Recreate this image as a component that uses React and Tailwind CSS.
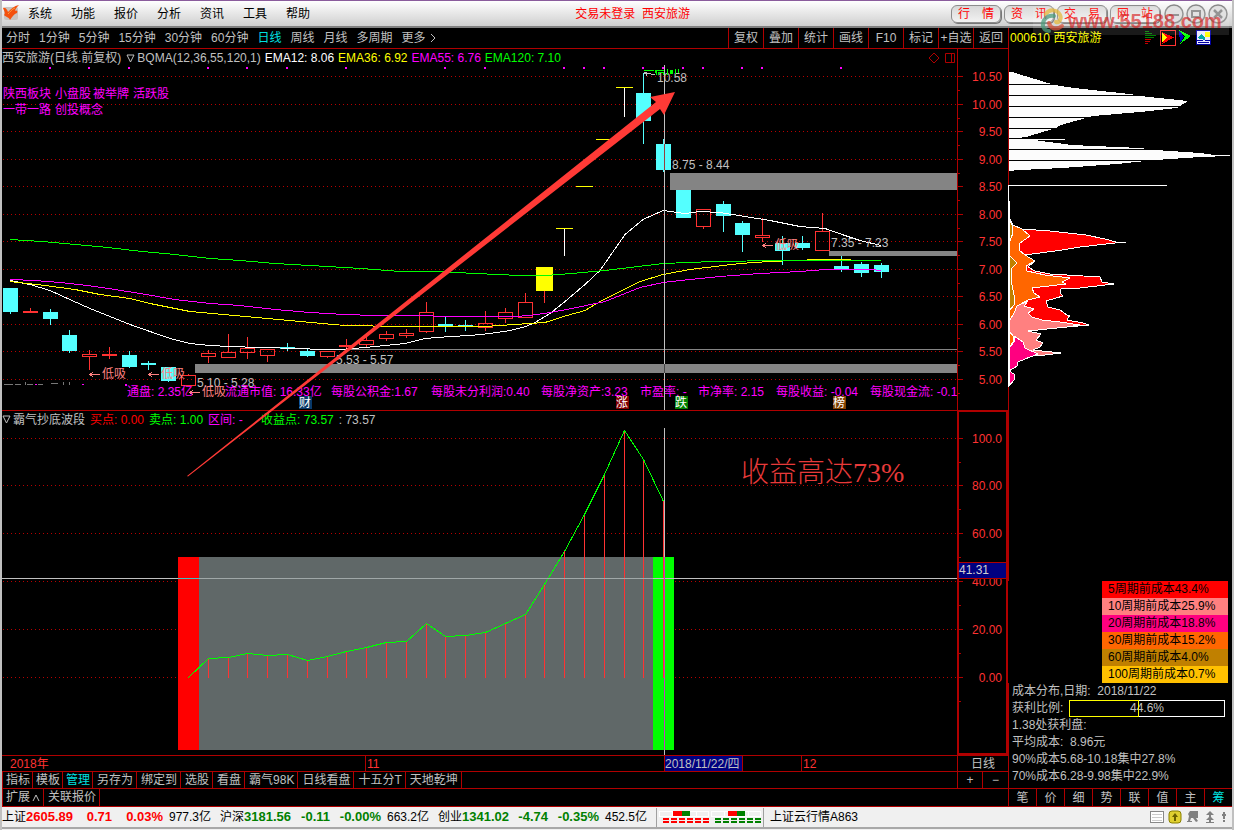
/**
 * App.jsx
 * Stock terminal: menu, K-line chart, indicator pane, cost distribution, ticker bar.
 */
import { clsx } from "clsx";

const MENUS = ["系统", "功能", "报价", "分析", "资讯", "工具", "帮助"];
const PERIODS = ["分时", "1分钟", "5分钟", "15分钟", "30分钟", "60分钟", "日线", "周线", "月线", "多周期"];
const TOOLS = ["复权", "叠加", "统计", "画线", "F10", "标记", "+自选", "返回"];
const LINKS = [["行", "情"], ["资", "讯"], ["交", "易"], ["网", "站"]];
const SIDE_TABS = ["笔", "价", "细", "势", "联", "值", "主", "筹"];
const TABS = ["另存为", "绑定到", "选股", "看盘", "霸气98K", "日线看盘", "十五分T", "天地乾坤"];

const COSTS = [
  ["5周期前成本43.4%", "bg-[#ff0000]"],
  ["10周期前成本25.9%", "bg-[#ff8080]"],
  ["20周期前成本18.8%", "bg-[#ff0080]"],
  ["30周期前成本15.2%", "bg-[#ff6600]"],
  ["60周期前成本4.0%", "bg-[#c08000]"],
  ["100周期前成本0.7%", "bg-[#ffc000]"],
];

const INDICES = [
  { name: "上证", price: "2605.89", diff: "0.71", pct: "0.03%", amount: "977.3亿", up: true },
  { name: "沪深", price: "3181.56", diff: "-0.11", pct: "-0.00%", amount: "663.2亿", up: false },
  { name: "创业", price: "1341.02", diff: "-4.74", pct: "-0.35%", amount: "452.5亿", up: false },
];

// [x, high, top, bottom, low, kind]  d = down (filled), u = up (hollow)
const CANDLES = [
  [10, 288, 288, 312, 314, "d"], [30, 308, 311, 313, 313, "u"], [50, 309, 312, 319, 325, "d"],
  [69, 330, 335, 351, 353, "d"], [89, 350, 354, 357, 370, "u"], [109, 347, 354, 356, 359, "u"],
  [129, 351, 355, 367, 368, "d"], [148, 361, 363, 365, 370, "d"], [168, 367, 367, 381, 382, "d"],
  [188, 374, 375, 386, 386, "u"], [208, 350, 353, 357, 363, "u"], [228, 334, 352, 358, 358, "u"],
  [247, 337, 348, 353, 359, "u"], [267, 349, 349, 356, 362, "u"], [287, 343, 347, 349, 351, "d"],
  [307, 349, 351, 356, 357, "d"], [327, 351, 351, 357, 358, "u"], [346, 339, 345, 347, 350, "u"],
  [366, 337, 340, 345, 347, "u"], [386, 331, 334, 339, 341, "u"], [406, 329, 333, 336, 338, "u"],
  [426, 302, 312, 332, 333, "u"], [445, 316, 324, 326, 332, "d"], [465, 320, 325, 326, 331, "d"],
  [485, 311, 323, 328, 331, "u"], [505, 308, 312, 319, 323, "u"], [525, 293, 302, 318, 318, "u"],
  [643, 73, 93, 121, 144, "d"], [663, 139, 144, 170, 172, "d"], [683, 190, 190, 218, 218, "d"],
  [703, 209, 209, 227, 229, "u"], [723, 201, 204, 216, 232, "d"], [742, 221, 223, 235, 252, "d"],
  [762, 218, 235, 238, 242, "u"], [782, 236, 243, 251, 265, "d"], [802, 236, 243, 248, 250, "d"],
  [822, 213, 231, 251, 251, "u"], [841, 256, 266, 269, 272, "d"], [861, 262, 264, 273, 277, "d"],
  [881, 263, 265, 272, 278, "d"],
];

const EMA120 =
  "10,239 42,241 75,244 108,247 142,251 175,254 210,258 240,260 275,263 310,265 345,267 375,269 400,271 436,271 476,273 520,275 545,275 572,273 605,270 630,267 663,263 714,261 780,260 825,260 881,260";
const EMA55 =
  "10,279 35,280 60,282 88,285 115,289 140,293 175,299 210,303 240,305 275,309 310,312 345,314 375,315 410,315 456,316 515,316 530,315 550,312 567,309 605,301 640,287 663,282 690,279 720,276 760,273 800,271 825,269 870,269 881,270";
const EMA36 =
  "10,281 45,285 75,289 100,294 130,298 150,303 190,311 245,316 300,321 345,325 400,326 485,326 530,323 545,322 567,315 585,310 602,300 640,281 663,274 690,269 740,263 770,261 820,259 851,259";
const EMA12 =
  "10,280 30,284 50,290 72,300 90,308 110,316 130,324 150,331 170,338 190,343 210,345 230,346 260,347 300,348 320,349 340,349 365,347 385,345 405,343 425,338 450,336 470,335 490,333 510,330 526,326 535,322 550,313 565,301 585,284 600,270 625,234 643,219 663,210 685,213 700,211 720,212 745,216 770,220 800,226 825,228 845,235 860,240 881,245";

const SIGNAL_DOTS = [49, 88, 128, 207, 246, 286, 345, 444, 484, 563, 583, 603, 642, 662, 682, 702, 741, 761, 840];

const PRICE_GRID = [
  [76, "10.50"], [104, "10.00"], [131, "9.50"], [159, "9.00"], [186, "8.50"], [214, "8.00"],
  [241, "7.50"], [269, "7.00"], [296, "6.50"], [324, "6.00"], [351, "5.50"], [379, "5.00"],
];
const PROFIT_GRID = [
  [438, "100.0"], [485, "80.00"], [533, "60.00"], [581, "40.00"], [629, "20.00"], [677, "0.00"],
];

const PROFIT = [
  [188, 677], [208, 658], [228, 657], [247, 653], [267, 655], [287, 654], [307, 660], [327, 656],
  [346, 651], [366, 647], [386, 642], [406, 641], [426, 623], [445, 636], [465, 635], [485, 632],
  [505, 623], [525, 614], [544, 584], [564, 551], [584, 514], [604, 474], [624, 430], [643, 459], [663, 501],
];

const FUNDAMENTALS = [
  [127, "通盘: 2.35亿"], [225, "流通市值: 16.33亿"], [331, "每股公积金:1.67"], [431, "每股未分利润:0.40"],
  [541, "每股净资产:3.23"], [640, "市盈率: -"], [698, "市净率: 2.15"], [776, "每股收益: -0.04"], [870, "每股现金流: -0.1"],
];

const BADGES = [
  [299, "财", "#083868"], [616, "涨", "#800000"], [675, "跌", "#008000"], [833, "榜", "#804000"],
];

// ── Top bars ──────────────────────────────────────────────────────────────────
function MenuBar() {
  return (
    <header className="relative flex h-7 items-center border-t border-b-2 border-t-[#8a5c9c] border-b-[#808080] bg-gradient-to-b from-white to-[#cfcfcf] pl-px pr-1">
      <svg width="17" height="17" viewBox="0 0 17 17" aria-hidden="true">
        <rect x="1" y="2" width="14" height="13" rx="2" fill="#c9c4c0" />
        <path d="M0 3 C2 2 4 4 5 7 C8 4 11 1 16 0 C14 2 12 4 12 6 C14 5 15 6 14 8 C11 9 9 12 7 15 C6 12 3 12 1 10 C3 8 1 6 0 3Z" fill="#f4500c" />
        <path d="M5 9 C7 7 9 4 12 3" stroke="#ff9a3c" strokeWidth="1" fill="none" />
      </svg>
      <nav className="ml-2 flex gap-[19px]">
        {MENUS.map((m) => (
          <button key={m} className="text-xs text-black">{m}</button>
        ))}
      </nav>
      <h1 className="flex-1 pl-1 text-center text-xs text-[#ff0000]">交易未登录&nbsp; 西安旅游</h1>
      <div className="flex gap-[3px]">
        {LINKS.map(([a, b]) => (
          <button
            key={a}
            className="flex h-[18px] w-[50px] items-center justify-between rounded-md border border-[#8c8c8c] bg-gradient-to-b from-[#d8d8d8] to-[#f2f2f2] px-[6px] text-xs text-[#ff0000] shadow-[1px_1px_0_#777]"
          >
            <span>{a}</span>
            <span>{b}</span>
          </button>
        ))}
      </div>
      <div className="ml-1 flex gap-[2px] text-[#888]">
        <button aria-label="最小化">
          <svg width="20" height="20" viewBox="0 0 20 20" fill="none" stroke="currentColor" strokeWidth="2">
            <circle cx="10" cy="10" r="9" fill="#dedede" strokeWidth="1.5" /><path d="M5 11h10" />
          </svg>
        </button>
        <button aria-label="还原">
          <svg width="20" height="20" viewBox="0 0 20 20" fill="none" stroke="currentColor" strokeWidth="2">
            <circle cx="10" cy="10" r="9" fill="#dedede" strokeWidth="1.5" /><path d="M6 7h8v6H6z" />
          </svg>
        </button>
        <button aria-label="关闭">
          <svg width="20" height="20" viewBox="0 0 20 20" fill="none" stroke="currentColor" strokeWidth="2.5">
            <circle cx="10" cy="10" r="9" fill="#dedede" strokeWidth="1.5" /><path d="M6 6l8 8M14 6l-8 8" />
          </svg>
        </button>
      </div>

      {/* Site watermark floats over the link buttons */}
      <div className="pointer-events-none absolute right-[3px] top-[6px] z-20 flex h-[28px] w-[196px] items-center gap-[2px] bg-white/10 pl-[7px]">
        <svg width="26" height="26" viewBox="0 0 26 26" fill="none" strokeWidth="4" strokeLinecap="round" opacity="0.75">
          <path d="M6 6 C9 1 17 1 20 7 C22 11 19 15 16 14" stroke="#e6b93c" />
          <path d="M14 8 C7 7 2 12 3 18 C4 22 7 23 9 23" stroke="#4c9c7c" />
          <path d="M9 15 C10 20 16 23 22 18" stroke="#d8533c" />
        </svg>
        <span className="text-xl font-bold text-[#d81c1c]/65">www.55188.com</span>
      </div>
    </header>
  );
}

function PeriodBar() {
  return (
    <div className="flex h-[21px] items-stretch border-b border-[#b00000]">
      <nav className="flex flex-1 items-center gap-[9px] pl-1">
        {PERIODS.map((p) => (
          <button key={p} className={clsx("text-xs whitespace-nowrap", p === "日线" ? "text-[#00e0e0]" : "text-[#c0c0c0]")}>
            {p}
          </button>
        ))}
        <button className="flex items-center gap-1 text-xs whitespace-nowrap text-[#c0c0c0]">
          更多
          <svg width="6" height="10" viewBox="0 0 6 10" fill="none" stroke="currentColor" aria-hidden="true">
            <path d="M1 1l4 4l-4 4" />
          </svg>
        </button>
      </nav>
      <div className="flex">
        {TOOLS.map((t) => (
          <button key={t} className="w-[35px] whitespace-nowrap border-l border-[#b00000] text-center text-xs text-[#c0c0c0]">
            {t}
          </button>
        ))}
      </div>
    </div>
  );
}

// ── Charts ────────────────────────────────────────────────────────────────────
function Down() {
  return (
    <svg width="9" height="9" viewBox="0 0 9 9" fill="none" stroke="#c0c0c0" className="shrink-0">
      <path d="M1 1h7L4.5 8z" />
    </svg>
  );
}

function Grid({ rows }) {
  return rows.map(([y, label]) => (
    <g key={label}>
      <line x1="3" x2="957" y1={y + 0.5} y2={y + 0.5} stroke="#b80000" strokeDasharray="1 3" />
      <line x1="957" x2="963" y1={y + 0.5} y2={y + 0.5} stroke="#b00000" />
      <text x="1002" y={y + 5} textAnchor="end" fill="#ff3232">{label}</text>
    </g>
  ));
}

function Candle({ data }) {
  const [x, high, top, bottom, low, kind] = data;
  if (kind === "d") {
    return (
      <g fill="#54ffff">
        <rect x={x} y={high} width="1" height={low - high} />
        <rect x={x - 7} y={top} width="15" height={bottom - top} />
      </g>
    );
  }
  return (
    <g stroke="#ff3232" fill="none">
      <path d={`M${x + 0.5} ${high}V${top}M${x + 0.5} ${bottom}V${low}`} />
      <rect x={x - 6.5} y={top + 0.5} width="14" height={bottom - top - 1} />
    </g>
  );
}

function BuyMark({ x, y, children }) {
  return (
    <g>
      <path d={`M${x} ${y - 3.5}h10M${x + 3} ${y - 6}l-3 2.5l3 2.5`} stroke="#ff8080" fill="none" />
      <text x={x + 12} y={y} fill="#ff8080">{children}</text>
    </g>
  );
}

function PriceChart() {
  return (
    <svg viewBox="2 67 1006 343" className="relative z-10 block h-auto w-full overflow-visible text-xs" shapeRendering="crispEdges">
      <Grid rows={PRICE_GRID} />
      <line x1="957.5" x2="957.5" y1="67" y2="410" stroke="#b00000" />
      {PRICE_GRID.map(([y]) => (
        <line key={y} x1="957" x2="960" y1={y + 14.5} y2={y + 14.5} stroke="#b00000" />
      ))}
      {SIGNAL_DOTS.map((x) => (
        <rect key={x} x={x} y="67" width="2" height="2" fill="#ff00ff" />
      ))}

      <g fill="#ff00ff">
        <text x="3" y="98">陕西板块</text>
        <text x="55" y="98">小盘股</text>
        <text x="93" y="98">被举牌</text>
        <text x="133" y="98">活跃股</text>
        <text x="3" y="114">一带一路</text>
        <text x="55" y="114">创投概念</text>
      </g>

      {CANDLES.map((c) => <Candle key={c[0]} data={c} />)}

      {/* limit-up days */}
      <rect x="536" y="267" width="17" height="24" fill="#ffff00" />
      <rect x="544" y="291" width="1" height="12" fill="#ff3232" />
      <g fill="#ffff00">
        <rect x="556" y="228" width="17" height="1" />
        <rect x="576" y="186" width="17" height="1" />
        <rect x="596" y="139" width="17" height="1" />
        <rect x="616" y="87" width="17" height="1" />
      </g>
      <rect x="564" y="229" width="1" height="27" fill="#fff" />
      <rect x="624" y="88" width="1" height="29" fill="#fff" />

      {/* gap zones */}
      <g fill="#848484">
        <rect x="670" y="173" width="287" height="17" />
        <rect x="829" y="251" width="128" height="5" />
        <rect x="346" y="349" width="611" height="1" />
        <rect x="195" y="364" width="762" height="9" />
      </g>

      <g fill="none" transform="translate(0 0.5)">
        <polyline points={EMA12} stroke="#fff" />
        <polyline points={EMA36} stroke="#ffff00" />
        <polyline points={EMA55} stroke="#ff00ff" />
        <polyline points={EMA120} stroke="#00ff00" />
      </g>

      <g fill="#c0c0c0">
        <text x="657" y="82">10.58</text>
        <text x="672" y="169">8.75 - 8.44</text>
        <text x="831" y="247">7.35 - 7.23</text>
        <text x="336" y="364">5.53 - 5.57</text>
        <text x="197" y="387">5.10 - 5.28</text>
        <path d="M644 72h3v1h4v1h4v1h-4v-1h-4v2h-1v-2h-2z" />
        <path d="M4 384h9v1h-9zM15 384h6v1h-6zM25 382h1v3h-1zM27 384h6v1h-6zM38 384h5v1h-5zM51 383h7v1h-7zM63 382h1v3h-1zM69 382h1v3h-1z" fill="#777" />
      </g>
      <path d="M35 384h2v1h-2zM82 384h2v1h-2zM125 384h2v2h-2z" fill="#ff00ff" />
      <path d="M644 70h10v1h-10zM655 70h10v1h-8v4h-1zM658 72h6v3h-1v-2h-4v2h-1zM667 69h1v6h-1zM670 70h3v4h-3zM675 69h1v5h-1zM678 69h1v4h-1z" fill="#00ff00" />

      <BuyMark x={90} y={378}>低吸</BuyMark>
      <BuyMark x={149} y={378}>低吸</BuyMark>
      <BuyMark x={190} y={396}>低吸</BuyMark>
      <BuyMark x={763} y={249}>低吸</BuyMark>

      <g fill="#ff00ff">
        {FUNDAMENTALS.map(([x, label]) => <text key={x} x={x} y="396">{label}</text>)}
      </g>
      {BADGES.map(([x, label, color]) => (
        <g key={x}>
          <rect x={x} y="396" width="13" height="13" fill={color} />
          <text x={x} y="407" fill="#fff">{label}</text>
        </g>
      ))}

      {/* crosshair inverts what it crosses */}
      <rect x="664" y="65" width="1" height="345" fill="#c0c0c0" />
      <rect x="664" y="144" width="1" height="26" fill="#943f3f" />
      <rect x="664" y="364" width="1" height="9" fill="#444" />

      {/* trend arrow reaches into the pane below */}
      <path
        d="M187 476L656 102L650 97L675 92L664 115L660 109L188 476.5Z"
        fill="#ff3a36"
        shapeRendering="auto"
      />
    </svg>
  );
}

function ProfitChart() {
  return (
    <svg viewBox="2 428 1006 327" className="block h-auto w-full text-xs" shapeRendering="crispEdges">
      <Grid rows={PROFIT_GRID} />
      {PROFIT_GRID.map(([y]) => (
        <line key={y} x1="957" x2="961" y1={y + 24.5} y2={y + 24.5} stroke="#b00000" />
      ))}
      <rect x="178" y="557" width="21" height="193" fill="#ff0000" />
      <rect x="199" y="557" width="454" height="193" fill="#606868" />
      <rect x="653" y="557" width="21" height="193" fill="#00ff00" />
      {PROFIT.slice(1).map(([x, y]) => (
        <rect key={x} x={x} y={y} width="1" height={678 - y} fill="#ff3232" />
      ))}
      <polyline points={PROFIT.map(([x, y]) => `${x + 0.5},${y + 0.5}`).join(" ")} fill="none" stroke="#00ff00" />
      <text x="741" y="482" fill="#e83a3a" fontSize="28" className="font-['Liberation_Serif','Noto_Sans_CJK_SC',serif] font-light">
        收益高达73%
      </text>

      {/* crosshair inverts what it crosses */}
      <rect x="2" y="578" width="955" height="1" fill="#c0c0c0" />
      <rect x="178" y="578" width="21" height="1" fill="#3fc0c0" />
      <rect x="199" y="578" width="454" height="1" fill="#a0a8a8" />
      <rect x="664" y="428" width="1" height="327" fill="#c0c0c0" />
      <rect x="664" y="557" width="1" height="193" fill="#c03fc0" />

      <path d="M958 428V754H1007V428" fill="none" stroke="#b00000" strokeWidth="2" />
      <rect x="959" y="562" width="47" height="16" fill="#000080" />
      <path d="M958 562.5h49M958 578.5h49" stroke="#b00000" />
      <text x="959" y="574" fill="#d0d0d0">41.31</text>
    </svg>
  );
}

function ChartColumn() {
  return (
    <section className="min-w-0 flex-1">
      <div className="flex h-[18px]">
        <div className="flex flex-1 items-center whitespace-nowrap text-xs text-[#c0c0c0]">
          <span>西安旅游(日线.前复权)</span>
          <span className="ml-[5px] mr-[2px]"><Down /></span>
          <span>BQMA(12,36,55,120,1)</span>
          <div className="ml-1 flex gap-1">
            <span className="text-white">EMA12: 8.06</span>
            <span className="text-[#ffff00]">EMA36: 6.92</span>
            <span className="text-[#ff00ff]">EMA55: 6.76</span>
            <span className="text-[#00ff00]">EMA120: 7.10</span>
          </div>
          <svg width="28" height="12" viewBox="0 0 28 12" fill="none" stroke="#b00000" className="ml-auto mr-px">
            <path d="M6 1l5 5l-5 5l-5 -5zM17.5 1.5h9v9h-9zM23.5 1.5v9" />
          </svg>
        </div>
        <div className="w-[51px] border-l border-[#b00000]" />
      </div>
      <PriceChart />

      <div className="flex h-[18px] border-t border-[#b00000]">
        <div className="flex flex-1 items-center gap-[5px] whitespace-nowrap text-xs text-[#c0c0c0]">
          <span className="flex items-center gap-[2px]"><Down />霸气抄底波段</span>
          <span className="text-[#ff0000]">买点: 0.00</span>
          <span className="text-[#00ff00]">卖点: 1.00</span>
          <span className="w-12 text-[#ff00ff]">区间: -</span>
          <span className="text-[#00ff00]">收益点: 73.57</span>
          <span>: 73.57</span>
        </div>
        <div className="w-[51px] border-x-2 border-t border-[#b00000]" />
      </div>
      <ProfitChart />

      {/* Time axis */}
      <div className="flex h-4 border-t border-[#b00000] text-xs leading-4 text-[#ff3232]">
        <div className="w-[363px] pl-2">2018年</div>
        <div className="w-[299px] border-l border-[#b00000] pl-px">11</div>
        <div className="w-[79px] whitespace-nowrap border-x border-[#b00000] bg-[#000080] text-[#c0c0c0]">2018/11/22/四</div>
        <div className="w-[58px]" />
        <div className="flex-1 border-l border-[#b00000] pl-px">12</div>
        <div className="w-[51px] border-l border-[#b00000] text-center text-[#c0c0c0]">日线</div>
      </div>

      {/* Indicator tabs */}
      <div className="flex h-[17px] border-t border-l border-[#b00000] text-xs leading-4 text-[#c0c0c0]">
        {["指标", "模板", "管理"].map((t) => (
          <button key={t} className={clsx("border-r border-[#b00000] pl-[3px] pr-[2px]", t === "管理" && "text-[#00e0e0]")}>
            {t}
          </button>
        ))}
        {TABS.map((t) => (
          <button key={t} className="border-r border-[#b00000] pl-1 pr-[3px]">{t}</button>
        ))}
        <button className="ml-auto w-[25px] border-l border-[#b00000]">+</button>
        <button className="w-[26px] border-l border-[#b00000]">−</button>
      </div>
      <div className="flex h-[18px] border-t border-l border-[#b00000] text-xs leading-[17px] text-[#c0c0c0]">
        <button className="flex items-center gap-[2px] border-r border-[#b00000] px-[3px]">
          扩展
          <svg width="8" height="8" viewBox="0 0 8 8" fill="none" stroke="currentColor" aria-hidden="true">
            <path d="M1 7l3 -6l3 6" />
          </svg>
        </button>
        <button className="border-r border-[#b00000] pl-1 pr-[3px]">关联报价</button>
      </div>
    </section>
  );
}

// ── Cost distribution ─────────────────────────────────────────────────────────
function Distribution() {
  return (
    <svg viewBox="1008 49 224 532" className="block h-auto w-full" shapeRendering="crispEdges">
      <rect x="1008" y="49" width="1" height="532" fill="#b00000" />
      <path
        d="M1009 72h3L1048 83L1060 86L1083 89L1130 94L1140 96L1188 101L1177 108L1140 112L1093 116L1061 125L1056 128L1026 137L1009 139Z"
        fill="#fcfcfc"
      />
      <path
        d="M1009 139h56v1h-31L1072 145L1140 148L1156 150L1200 153L1215 155H1230V156L1200 157L1155 160L1117 164L1062 168L1020 170L1009 171Z"
        fill="#fcfcfc"
      />
      <path d="M1009 84.5h60M1009 95.5h160M1009 106.5h180M1009 117.5h90M1009 128.5h60M1009 138.5h60M1009 149.5h160M1009 160.5h160" stroke="#000" />
      <rect x="1008" y="185" width="159" height="1" fill="#fff" />
      <rect x="1008" y="185" width="1" height="202" fill="#fff" />
      <rect x="1009" y="201" width="1" height="17" fill="#fff" />
      <g stroke="#fff">
        <path
          d="M1009 217L1013 225L1022 229L1050 231L1086 235L1105 239L1116 242H1126L1115 243L1080 247L1062 250L1025 255L1035 261L1028 267L1035 271L1050 274L1100 277L1102 282L1114 284L1105 285L1080 288L1061 289L1060 293L1063 296L1056 298L1046 301L1048 307L1060 310L1067 315H1070L1067 320L1083 323L1089 325L1067 327L1028 331L1009 331Z"
          fill="#ff0000"
        />
        <path
          d="M1009 217L1013 225L1022 229L1030 236L1020 243L1019 250L1025 255L1035 261L1026 266L1027 271L1045 275L1070 278L1062 282L1066 284L1032 288L1034 293L1040 297L1028 300L1017 306L1014 313L1013 318L1009 322Z"
          fill="#ff6600"
        />
        <path d="M1009 219L1012 225L1013 233L1009 243ZM1009 255L1017 263L1012 268L1011 280L1015 300L1014 305L1009 311Z" fill="#c08000" />
        <path
          d="M1014 313L1017 306L1028 301L1024 306L1034 309L1028 313L1032 317L1042 320L1060 322L1080 325L1067 327L1028 331L1041 334L1036 340L1043 343L1040 347L1033 350L1061 353L1037 356L1023 350L1009 334V322Z"
          fill="#ff8080"
        />
        <path d="M1009 331L1014 337L1013 342L1009 348Z" fill="#ff6600" />
        <path d="M1009 348L1014 342V336L1023 342L1025 348L1038 354L1030 357L1018 362L1017 366L1009 371L1014 374V380L1009 386Z" fill="#ff0080" />
      </g>
    </svg>
  );
}

function CostPanel() {
  return (
    <aside className="flex w-[224px] shrink-0 flex-col">
      <div className="-mt-[21px] flex h-[21px] items-start border-l border-[#b00000] pl-px pr-3 pt-[2px] text-xs text-[#ffff00]">
        <span>000610 西安旅游</span>
        <svg width="76" height="16" viewBox="0 0 76 16" className="ml-auto shrink-0" shapeRendering="crispEdges">
          <path d="M1 1.500h4M1 3.500h7M1 5.500h11M1 7.500h9" stroke="#008000" />
          <path d="M1 9.500h6M1 11.500h5M1 13.500h3" stroke="#c00000" />
          <rect x="16.500" y="0.500" width="15" height="15" fill="#000" stroke="#ff3232" />
          <path d="M18 2L30 7.500L18 14L21 7.500Z" fill="#ff0000" />
          <path d="M18 2L23 7.500L18 13Z" fill="#ffff00" />
          <path d="M35 0L47 6L36 14L41 6.500Z" fill="#00ff00" />
          <path d="M35 0L40 6.500L36 13Z" fill="#0000c0" />
          <rect x="52" y="0" width="15" height="15" fill="#e8e8ff" />
          <path d="M53 8l4 -4l4 3v3z" fill="#00a8a8" />
          <rect x="61" y="2" width="5" height="5" fill="#ffff00" />
          <path d="M53 10.500h6M61 10.500h5M54 12.500h11M52.500 0.500h14v14h-14z" stroke="#0000a0" fill="none" />
        </svg>
      </div>
      <Distribution />

      <ul className="ml-auto mr-1 w-[126px] text-xs leading-[17px] text-black">
        {COSTS.map(([label, bg]) => (
          <li key={label} className={clsx("h-[17px] pl-[6px] whitespace-nowrap", bg)}>{label}</li>
        ))}
      </ul>

      <div className="border-l border-[#b00000] pb-[3px] pl-[3px] text-xs leading-[17px] text-[#c0c0c0]">
        <p>成本分布,日期:&nbsp; 2018/11/22</p>
        <div className="flex h-[17px] items-center">
          <span className="w-[57px]">获利比例:</span>
          <div className="relative flex h-[17px] w-[156px] items-center justify-center border border-white">
            <div className="absolute -inset-y-px -left-px w-[70px] border border-[#ffff00]" />
            44.6%
          </div>
        </div>
        <p>1.38处获利盘:</p>
        <p>平均成本:&nbsp; 8.96元</p>
        <p>90%成本5.68-10.18集中27.8%</p>
        <p>70%成本6.28-9.98集中22.9%</p>
      </div>

      <div className="flex h-[18px] border-t border-[#b00000] text-xs leading-[18px] text-[#c0c0c0]">
        {SIDE_TABS.map((t) => (
          <button key={t} className={clsx("flex-1 border-l border-[#b00000]", t === "筹" && "text-[#00e0e0]")}>{t}</button>
        ))}
      </div>
    </aside>
  );
}

// ── Status bar ────────────────────────────────────────────────────────────────
function MiniBars({ color, at }) {
  return (
    <svg width="50" height="14" viewBox="0 0 50 14" shapeRendering="crispEdges">
      <path d="M0.5 1.5h49v5h-49zM13.5 1.5v5M37.5 1.5v5" fill="#f0f0f0" stroke="#fff" />
      <rect x={at} y="1" width="9" height="5" fill="#ff0000" />
      <rect x={at + 9} y="1" width="8" height="5" fill="#008000" />
      <path d="M4 9h46M4 12h46" stroke={color} strokeWidth="2" strokeDasharray="6 2" />
    </svg>
  );
}

function StatusBar() {
  return (
    <footer className="flex h-[23px] items-center border-b-2 border-t border-b-[#a8a8a8] border-t-[#b00000] bg-[#f0f0f0] text-xs text-black">
      {INDICES.map((i) => (
        <div key={i.name} className="flex w-[218px] items-center whitespace-nowrap text-right">
          <span className="w-6">{i.name}</span>
          <b className={clsx("w-[47px] text-[13px]", i.up ? "text-[#ff0000]" : "text-[#008000]")}>{i.price}</b>
          <b className={clsx("w-[39px] text-[13px]", i.up ? "text-[#ff0000]" : "text-[#008000]")}>{i.diff}</b>
          <b className={clsx("w-[51px] text-[13px]", i.up ? "text-[#ff0000]" : "text-[#008000]")}>{i.pct}</b>
          <span className="w-12">{i.amount}</span>
        </div>
      ))}
      <div className="flex h-[19px] items-center gap-[2px] border-x border-[#a0a0a0] px-[2px]">
        <MiniBars color="#ff0000" at={14} />
        <MiniBars color="#008000" at={17} />
      </div>
      <span className="ml-[6px]">上证云行情A863</span>
      <svg width="78" height="14" viewBox="0 0 78 14" className="ml-auto mr-1">
        <rect x="0.5" y="1.5" width="13" height="11" fill="#fff" stroke="#888" />
        <path d="M2 4.500h10M2 7.500h10M2 10.500h10" stroke="#ccc" />
        <rect x="19" y="1" width="12" height="12" rx="3" fill="#e0d030" stroke="#8a8000" />
        <path d="M25 3l3 4h-2v4h-2v-4h-2z" fill="#6a6000" />
        <path d="M40 1h8v7h-2l2 3l-2 1l-3 -4h-2l-1 3h2v1h-5v-1h1l1 -5l-1 -2z" fill="#808080" />
        <path d="M60 1l4 4h-3v2l3 3h-3v2h3v1h-8v-1h3v-2h-3l3 -3v-2h-3z" fill="#808080" />
        <path d="M73 2h2v2h1v2h-1v3h-2v-3h-1v-2h1zM73 10h2v2h-2z" fill="#808080" />
      </svg>
    </footer>
  );
}

export default function App() {
  return (
    <div className="min-h-screen border-x-2 border-[#c0c0c0] bg-[#f0f0f0] font-['Liberation_Sans','Noto_Sans_CJK_SC',sans-serif]">
      <MenuBar />
      <main className="bg-black">
        <div className="mr-[224px]">
          <PeriodBar />
        </div>
        <div className="flex">
          <ChartColumn />
          <CostPanel />
        </div>
      </main>
      <StatusBar />
    </div>
  );
}
